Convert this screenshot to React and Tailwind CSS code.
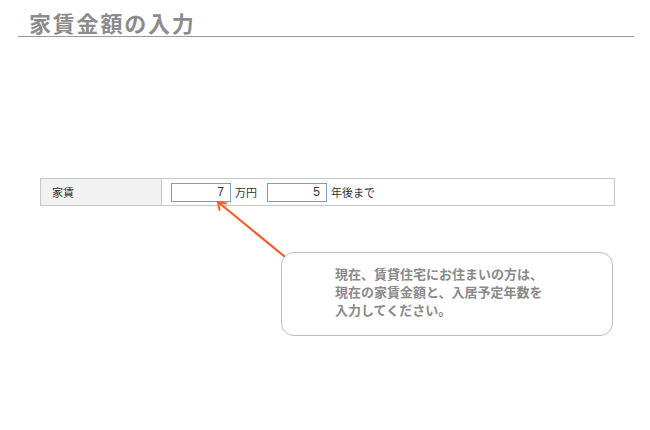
import React from 'react';

const jp = { fontFamily: '"Noto Sans CJK JP", "Noto Sans", sans-serif' };

export default function App() {
  return (
    <div className="relative w-[650px] h-[430px] bg-white overflow-hidden" style={jp}>
      {/* Title */}
      <div className="ml-[18px] w-[616px] border-b border-[#999999] pt-[9px]">
        <h1 className="pl-[11px] text-[22px] leading-[27px] font-bold text-[#8c8c8c] tracking-[1.8px]">
          家賃金額の入力
        </h1>
      </div>

      {/* Form row */}
      <div className="mt-[141px] ml-[40px] w-[575px] h-[28px] border border-[#c8c8c8] flex text-[11px] text-[#333333]">
        <div className="w-[121px] bg-[#f2f2f2] border-r border-[#c8c8c8] pl-[11px] flex items-center">
          家賃
        </div>
        <div className="flex-1 flex items-center pl-[9px]">
          <div className="w-[60px] h-[19px] border border-[#7f9db9] flex items-center justify-end pr-[6px] text-[12px] font-['Liberation_Sans']">
            7
          </div>
          <span className="ml-[4px]">万円</span>
          <div className="ml-[10px] w-[60px] h-[19px] border border-[#7f9db9] flex items-center justify-end pr-[6px] text-[12px] font-['Liberation_Sans']">
            5
          </div>
          <span className="ml-[4px]">年後まで</span>
        </div>
      </div>

      {/* Callout */}
      <div className="mt-[46px] ml-[281px] w-[332px] h-[84px] border border-[#bdbdbd] rounded-[13px] pl-[53px] pt-[12px]">
        <p className="text-[13px] leading-[18px] font-bold text-[#8a8a8a]">
          現在、賃貸住宅にお住まいの方は、
          <br />
          現在の家賃金額と、入居予定年数を
          <br />
          入力してください。
        </p>
      </div>

      {/* Arrow */}
      <svg className="absolute left-0 top-0 pointer-events-none" width="650" height="430">
        <line x1="284" y1="256" x2="218" y2="202" stroke="#ff5a28" strokeWidth="2.2" strokeLinecap="round" />
        <path d="M218 202 L219.5 210 M218 202 L226 203.5" stroke="#ff5a28" strokeWidth="1.8" fill="none" strokeLinecap="round" />
      </svg>
    </div>
  );
}
